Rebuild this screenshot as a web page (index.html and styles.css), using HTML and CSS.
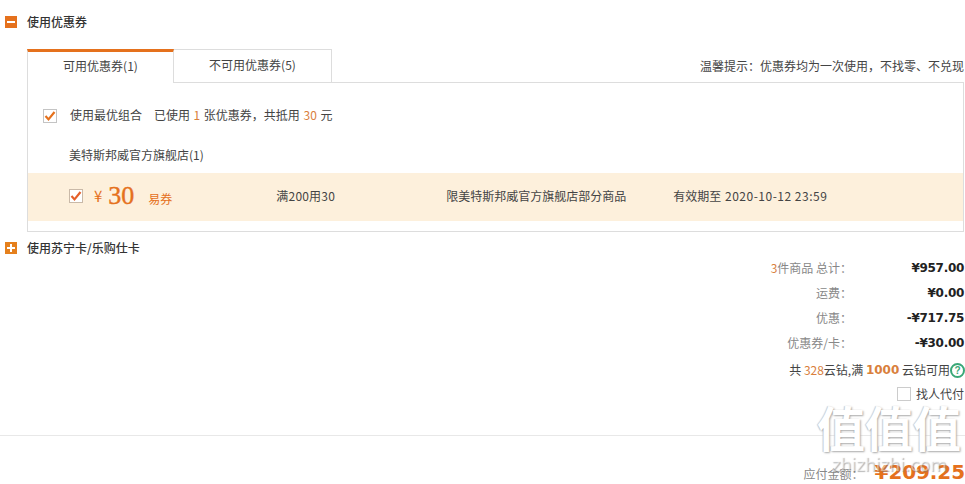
FILE: index.html
```html
<!DOCTYPE html>
<html lang="zh">
<head>
<meta charset="utf-8">
<title>使用优惠券</title>
<link rel="stylesheet" href="styles.css">
</head>
<body>
<div class="page">
  <div class="sec-head first"><span class="toggle"><svg viewBox="0 0 12 12" width="12" height="12"><rect width="12" height="12" fill="#e5711d"/><rect x="2" y="5" width="8" height="2" fill="#fff"/></svg></span><b>使用优惠券</b></div>
  <div class="coupons">
    <div class="tabs">
      <div class="tab active">可用优惠券(1)</div>
      <div class="tab">不可用优惠券(5)</div>
      <div class="tip">温馨提示：优惠券均为一次使用，不找零、不兑现</div>
    </div>
    <div class="panel">
      <div class="best">
        <span class="check"><svg viewBox="0 0 14 14" width="14" height="14"><rect x=".5" y=".5" width="13" height="13" fill="#fff" stroke="#c4c4c4"/><path d="M2.5 7l3 3.4L11.5 3" fill="none" stroke="#e5711d" stroke-width="2.2"/></svg></span>
        <span class="best-label">使用最优组合</span>
        <span class="best-note">已使用 <em>1</em> 张优惠券，共抵用 <em>30</em> 元</span>
      </div>
      <div class="store">美特斯邦威官方旗舰店(1)</div>
      <div class="coupon">
        <span class="check small"><svg viewBox="0 0 14 14" width="14" height="14"><rect x=".5" y=".5" width="13" height="13" fill="#fff" stroke="#c9b9a8"/><path d="M2.5 7l3 3.4L11.5 3" fill="none" stroke="#e5602a" stroke-width="2.2"/></svg></span>
        <span class="yen">¥</span><span class="amount">30</span><span class="kind">易券</span>
        <span class="cond">满200用30</span>
        <span class="scope">限美特斯邦威官方旗舰店部分商品</span>
        <span class="valid">有效期至 <span class="date">2020-10-12 23:59</span></span>
      </div>
    </div>
  </div>
  <div class="sec-head second"><span class="toggle"><svg viewBox="0 0 12 12" width="12" height="12"><rect width="12" height="12" fill="#e5801d"/><rect x="2" y="5" width="8" height="2" fill="#fff"/><rect x="5" y="2" width="2" height="8" fill="#fff"/></svg></span><b>使用苏宁卡/乐购仕卡</b></div>
  <div class="summary">
    <div class="row"><span class="key"><em>3</em>件商品 总计：</span><span class="val">¥957.00</span></div>
    <div class="row"><span class="key">运费：</span><span class="val">¥0.00</span></div>
    <div class="row"><span class="key">优惠：</span><span class="val">-¥717.75</span></div>
    <div class="row"><span class="key">优惠券/卡：</span><span class="val">-¥30.00</span></div>
    <div class="diamond">共 <em>328</em>云钻,满 <strong>1000</strong> 云钻可用<span class="help">?</span></div>
    <div class="other"><span class="box"></span>找人代付</div>
  </div>
  <div class="rule"></div>
  <div class="pay"><span class="pay-key">应付金额：</span><span class="pay-val">¥209.25</span></div>
  <div class="mark"><div class="mark-logo">值值值</div><div class="mark-url">zhizhizhi.com</div></div>
</div>
</body>
</html>
```
FILE: styles.css
```css
* { box-sizing: border-box; }
html, body { margin: 0; padding: 0; }
body { width: 965px; height: 484px; overflow: hidden; background: #fff; color: #444; font: 12px/18px "Noto Sans CJK SC", "Liberation Sans", sans-serif; }
em { font-style: normal; color: #d9803c; }
.page { position: relative; width: 965px; height: 484px; overflow: hidden; }
.sec-head { display: flex; align-items: center; height: 18px; padding-left: 5px; color: #333; }
.sec-head b { font-weight: 500; margin-left: 10px; }
.toggle { display: flex; width: 12px; height: 12px; }
.first { margin-top: 13px; }
.second { margin-top: 7px; }
.coupons { margin: 18px 1px 0 27px; }
.tabs { display: flex; height: 33px; align-items: stretch; position: relative; z-index: 1; }
.tab { width: 158px; border: 1px solid #ddd; border-left: 0; border-bottom: 0; display: flex; align-items: center; justify-content: center; padding-bottom: 2px; }
.tab.active { width: 147px; border: 1px solid #ddd; border-top: 3px solid #e5711d; border-bottom: 0; background: #fff; height: 34px; padding-bottom: 3px; }
.tip { margin-left: auto; align-self: flex-end; height: 18px; margin-bottom: 7px; white-space: nowrap; }
.panel { border: 1px solid #ddd; height: 150px; }
.best { display: flex; align-items: center; height: 18px; margin-top: 23px; padding-left: 15px; }
.check { display: flex; width: 14px; height: 14px; }
.best > .check { margin-top: 2px; }
.best-label { margin: 0 12px 0 13px; }
.best-note { word-spacing: .9px; }
.store { margin: 22px 0 0 41px; }
.coupon { position: relative; display: flex; align-items: center; height: 48px; margin-top: 9px; background: #fdf0dc; padding: 0 0 3px 41px; }
.check.small { margin-top: 1px; }
.yen { color: #e5711d; font-size: 15px; margin-left: 11px; }
.amount { color: #e5711d; font: 400 26px/30px "Liberation Serif", serif; -webkit-text-stroke: .4px #e5711d; margin-left: 6px; }
.kind { color: #e5711d; margin: 6px 0 0 14px; width: 128px; }
.cond { width: 170px; letter-spacing: .2px; }
.scope { width: 227px; }
.valid { white-space: nowrap; }
.date { letter-spacing: .5px; margin-left: 1px; }
.summary { display: flex; flex-direction: column; align-items: flex-end; padding-right: 1px; margin-top: -2px; }
.row { display: flex; height: 25px; align-items: center; }
.key { color: #888; }
.val { width: 112px; text-align: right; font: 700 12px/18px "DejaVu Sans", sans-serif; letter-spacing: -.3px; color: #222; }
.diamond { display: flex; align-items: center; height: 26px; white-space: pre; margin-top: 2px; color: #444; }
.diamond strong { color: #d9803c; font: 700 12px/18px "DejaVu Sans", sans-serif; }
.help { width: 15px; height: 15px; border: 2px solid #3aa878; border-radius: 50%; color: #3aa878; font: 700 10px/11px "Liberation Sans", sans-serif; text-align: center; margin-right: -1px; }
.other { display: flex; align-items: center; height: 22px; }
.box { width: 14px; height: 14px; border: 1px solid #ccc; margin-right: 5px; }
.rule { border-top: 1px solid #e8e8e8; margin-top: 30px; }
.pay { display: flex; align-items: center; justify-content: flex-end; margin-top: 23px; height: 26px; }
.pay-key { color: #888; margin: 3px 11px 0 0; }
.pay-val { color: #e5711d; font: 700 20px/24px "DejaVu Sans", sans-serif; letter-spacing: -.1px; }
.mark { position: absolute; left: 814px; top: 397px; width: 150px; text-align: center; pointer-events: none; }
.mark-logo { font: 700 48px/58px "Noto Sans CJK SC", sans-serif; color: #fff; text-shadow: 1px 1px 2px #aaa, -1px 0 1px #ccc; white-space: nowrap; }
.mark-url { font: 400 17px/20px "DejaVu Sans", sans-serif; color: rgba(255,255,255,.45); text-shadow: 1px 1px 1px rgba(120,120,120,.55); white-space: nowrap; }
```
